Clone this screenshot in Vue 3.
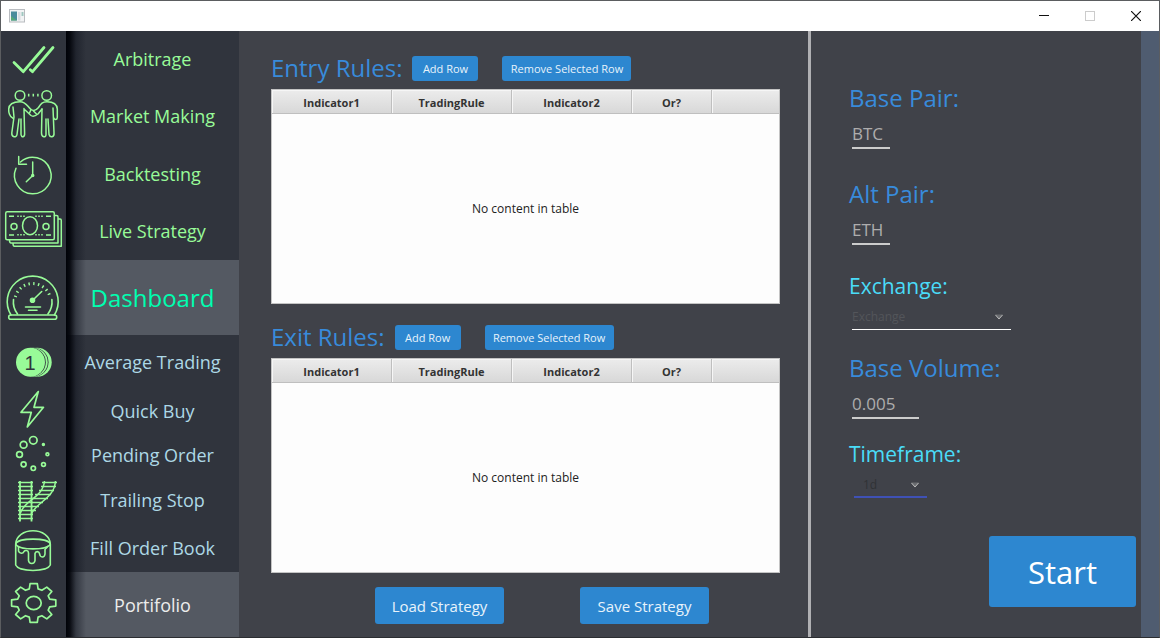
<script setup>
import { ref } from 'vue'

const menu = [
  { id: 'arbitrage', label: 'Arbitrage', top: 31, height: 56, tone: 'green' },
  { id: 'market', label: 'Market Making', top: 87, height: 58, tone: 'green' },
  { id: 'backtest', label: 'Backtesting', top: 145, height: 57, tone: 'green' },
  { id: 'live', label: 'Live Strategy', top: 202, height: 58, tone: 'green' },
  { id: 'dashboard', label: 'Dashboard', top: 260, height: 75, tone: 'active' },
  { id: 'average', label: 'Average Trading', top: 335, height: 54, tone: 'blue' },
  { id: 'quick', label: 'Quick Buy', top: 389, height: 44, tone: 'blue' },
  { id: 'pending', label: 'Pending Order', top: 433, height: 44, tone: 'blue' },
  { id: 'trailing', label: 'Trailing Stop', top: 477, height: 46, tone: 'blue' },
  { id: 'fill', label: 'Fill Order Book', top: 523, height: 49, tone: 'blue' },
  { id: 'portfolio', label: 'Portifolio', top: 572, height: 65, tone: 'plain' }
]

const sections = [
  { id: 'entry', title: 'Entry Rules:' },
  { id: 'exit', title: 'Exit Rules:' }
]
const columns = ['Indicator1', 'TradingRule', 'Indicator2', 'Or?', '']

const basePair = ref('BTC')
const altPair = ref('ETH')
const volume = ref('0.005')
const exchange = ref('Exchange')
const timeframe = ref('1d')

// Eight-toothed cog, slightly wider than tall
function cog(cx, cy) {
  const pts = []
  for (let i = 0; i < 8; i++) {
    const a = (i * Math.PI) / 4
    for (const [d, r] of [[-0.27, 14.6], [-0.16, 19.6], [0.16, 19.6], [0.27, 14.6]]) {
      pts.push(`${(cx + Math.cos(a + d) * r * 1.14).toFixed(1)} ${(cy + Math.sin(a + d) * r).toFixed(1)}`)
    }
  }
  return `M${pts.join('L')}Z`
}
const cogPath = cog(33.7, 603)
</script>

<template>
  <div class="window">
    <header class="titlebar">
      <svg class="app-icon" width="16" height="14" viewBox="0 0 16 14" aria-hidden="true">
        <rect x="0.5" y="0.5" width="15" height="12.5" fill="#f2f3f4" stroke="#b9bcc0" />
        <rect x="2" y="2.5" width="6" height="9" fill="#4b8c9c" />
        <path d="M2 11.5V7l6 4.500z" fill="#57a878" />
        <rect x="9" y="3" width="2.500" height="8.500" fill="#d9dde2" />
        <rect x="12.500" y="3" width="2" height="4" fill="#9fc7c0" />
      </svg>
      <div class="controls">
        <button type="button" aria-label="Minimize">
          <svg width="10" height="10" viewBox="0 0 10 10"><path d="M0 4.500H10" stroke="#111" /></svg>
        </button>
        <button type="button" aria-label="Maximize">
          <svg width="10" height="10" viewBox="0 0 10 10"><rect x="0.500" y="0.500" width="9" height="9" fill="none" stroke="#ccc" /></svg>
        </button>
        <button type="button" aria-label="Close">
          <svg width="10" height="10" viewBox="0 0 10 10"><path d="M0 0L10 10M10 0L0 10" stroke="#111" stroke-width="1.200" /></svg>
        </button>
      </div>
    </header>

    <div class="body">
      <nav class="menu">
        <button
          v-for="item in menu"
          :key="item.id"
          type="button"
          class="item"
          :class="[item.tone, item.id]"
        >
          <span class="icon">
            <svg width="66" :height="item.height" :viewBox="`0 ${item.top} 66 ${item.height}`" aria-hidden="true">
              <g v-if="item.id === 'arbitrage'" stroke-width="2.800">
                <path d="M14 62.500L23.300 71.700L44 47.500M30.300 69.700L32.500 71.700L53 47.500" />
              </g>
              <g v-else-if="item.id === 'market'" stroke-width="1.500">
                <circle cx="20" cy="95.500" r="4.800" />
                <circle cx="46.700" cy="95.500" r="4.800" />
                <path d="M28.700 93.800v2.600M33.300 93.800v2.600M37.900 93.800v2.600" stroke-linecap="butt" />
                <path d="M13 118.300C9.500 117 8.500 112 8.700 109C9 104 14 101.700 20 101.700C26 101.700 27 106 31 109.500C34 111.500 36.500 110 38.500 107.500C41 103.500 42.500 101.700 47 101.700C53 101.700 57 104 57.300 109V117.500C57.300 120 54.500 120 53.800 118" />
                <path d="M13 107L14 117L11.800 133C11.500 137.500 16.500 138 17 134.500L19 119M21 119V134.500C21.500 138 25 137.500 24.600 133L24 108.500M24 109L31 115.500C33 117 36 115.500 38 114L42 109" />
                <path d="M42 109L41.500 133C41.500 137.500 46 138 46 134.500V119M48 119L49 134.500C50 138 54.500 137.500 54 133L53 108M33.500 111L36.500 114M31 109.500L29.500 113" />
              </g>
              <g v-else-if="item.id === 'backtest'" stroke-width="1.500">
                <path d="M20.500 162A18.300 18.300 0 1 1 16 168.300M18.700 156.500V164.300H26.500M32.700 162V175.500L26.300 181.700" />
                <circle cx="32.700" cy="175.500" r="1" fill="#98fb98" />
              </g>
              <g v-else-if="item.id === 'live'" stroke-width="1.500">
                <rect x="5.700" y="211.700" width="48.600" height="28" rx="1.500" />
                <path d="M54.500 215.500H56.500Q58 215.500 58 217V243H11Q9.500 243 9.500 240M58.500 219H60Q61.300 219 61.300 220.500V246.300H14.500Q13 246.300 13 243.500" />
                <ellipse cx="30" cy="225.700" rx="7.500" ry="9" />
                <circle cx="14" cy="226.500" r="3" /><circle cx="46" cy="226.500" r="3" />
                <path d="M9 216.300h5M46 216.300h5M9 235h5M46 235h5M18 215.500v1.500M21 215.500v1.500M24 215.500v1.500M36 215.500v1.500M39 215.500v1.500M42 215.500v1.500M18 234v1.500M21 234v1.500M24 234v1.500M36 234v1.500M39 234v1.500M42 234v1.500" stroke-linecap="butt" />
              </g>
              <g v-else-if="item.id === 'dashboard'" stroke-width="1.600">
                <path d="M11 315A25.500 25.500 0 1 1 54.400 315M17.500 314A20 20 0 0 1 13.500 299.500M47.900 314A20 20 0 0 0 51.900 299.500" />
                <path d="M15.300 297A18 18 0 0 1 50.100 297" stroke-width="3" stroke-dasharray="1.400 3.400" stroke-linecap="butt" />
                <rect x="8.700" y="315" width="48" height="4.300" rx="2" />
                <path d="M32.700 300.300L41.700 291.500M25.500 307H40.500M28.500 310.300H37" />
                <circle cx="32.500" cy="300.300" r="2" fill="#98fb98" />
              </g>
              <g v-else-if="item.id === 'average'" stroke="none">
                <circle cx="37.200" cy="362.300" r="14.500" fill="#98fb98" />
                <circle cx="34" cy="362.300" r="14.500" fill="#30343d" />
                <circle cx="33.200" cy="362.300" r="14.500" fill="#98fb98" />
                <circle cx="31.300" cy="362.300" r="14.500" fill="#30343d" />
                <circle cx="30.500" cy="362.300" r="14.500" fill="#98fb98" />
                <text x="30" y="369.500" text-anchor="middle" font-size="20" fill="#30343d">1</text>
              </g>
              <g v-else-if="item.id === 'quick'" stroke-width="1.700">
                <path d="M38.300 391.500L21 412.300H31.300L27.300 427L43.500 407.300H34Z" />
              </g>
              <g v-else-if="item.id === 'pending'" stroke-width="1.700">
                <circle cx="33.300" cy="440.300" r="3.800" /><circle cx="23.600" cy="444.700" r="3.400" />
                <circle cx="19.500" cy="454.500" r="2.900" /><circle cx="23.600" cy="464.300" r="2.500" />
                <circle cx="33.300" cy="468.300" r="2.200" /><circle cx="43.500" cy="464.500" r="1.900" />
                <circle cx="47.400" cy="454.300" r="1.400" /><circle cx="43.400" cy="444.400" r="0.900" />
              </g>
              <g v-else-if="item.id === 'trailing'" stroke-width="1.500" stroke-linecap="butt">
                <path d="M20 481V521.500M31.500 481V521.500" stroke-width="1.800" />
                <path d="M18 482.500h15M18 486.500h15M18 490.500h15M18 494.500h15M18 498.500h15M18 502.500h15M18 506.500h15M18 510.500h15M18 514.500h15M18 518.500h15" />
                <path d="M44.500 481C43 498 24 500 20.500 513M55.500 481C54 500 35 502 31 515" stroke-width="1.500" />
                <path d="M42 482.500h15M41 486.500h15M39 490.500h15M35 494.500h16M33 498.500h15M31 502.500h12M31 506.500h8M31 510.500h5" />
              </g>
              <g v-else-if="item.id === 'fill'" stroke-width="1.600">
                <path d="M15.700 544C16 536 24 530.800 33 530.800S50 536 50.300 544V565C47 572.500 19 572.500 15.700 565Z" stroke="none" />
                <path d="M15.700 544C16 536 24 530.800 33 530.800S50 536 50.300 544V565C47 572.300 19 572.300 15.700 565V544" />
                <path d="M15.700 544C18 537.500 48 537.500 50.300 544C48 550.500 18 550.500 15.700 544" />
                <path d="M18.500 547V551C19.500 554 23 554 24 551.500C25 550 28.500 550 28.500 553V560.500C29 564.500 34.500 564.500 35 560.500V553.500C35.500 551 39 551 39.500 553.500C40 558 44.500 558 45 554V549.500C46 548 47 548 47.500 546.500" />
              </g>
              <g v-else stroke-width="1.700">
                <path :d="cogPath" />
                <ellipse cx="33.700" cy="603" rx="7.500" ry="6.700" />
              </g>
            </svg>
          </span>
          <span class="label">{{ item.label }}</span>
        </button>
      </nav>

      <main class="rules">
        <section v-for="s in sections" :key="s.id" class="section" :class="s.id">
          <div class="heading">
            <h2 :id="s.id + '-title'">{{ s.title }}</h2>
            <button type="button" class="btn small">Add Row</button>
            <button type="button" class="btn small wide">Remove Selected Row</button>
          </div>
          <table :aria-labelledby="s.id + '-title'">
            <colgroup>
              <col class="c-first" /><col class="c-mid" /><col class="c-mid" /><col class="c-or" /><col />
            </colgroup>
            <thead>
              <tr><th v-for="c in columns" :key="c" scope="col">{{ c }}</th></tr>
            </thead>
            <tbody>
              <tr><td colspan="5">No content in table</td></tr>
            </tbody>
          </table>
        </section>
        <div class="actions">
          <button type="button" class="btn large">Load Strategy</button>
          <button type="button" class="btn large">Save Strategy</button>
        </div>
      </main>

      <aside class="settings">
        <div class="field f-base">
          <label for="base">Base Pair:</label>
          <input id="base" v-model="basePair" type="text" class="pair" />
        </div>
        <div class="field f-alt">
          <label for="alt">Alt Pair:</label>
          <input id="alt" v-model="altPair" type="text" class="pair" />
        </div>
        <div class="field bright f-exchange">
          <label for="exchange">Exchange:</label>
          <div class="select">
            <select id="exchange" v-model="exchange"><option>Exchange</option></select>
            <svg width="8" height="6" viewBox="0 0 8 6" aria-hidden="true"><path d="M0 0.500H8L4 5.500Z" fill="#6a6c70" /><path d="M0.500 1L4 5L7.500 1" fill="none" stroke="#b8b8b8" /></svg>
          </div>
        </div>
        <div class="field f-volume">
          <label for="volume">Base Volume:</label>
          <input id="volume" v-model="volume" type="text" class="volume" />
        </div>
        <div class="field bright f-time">
          <label for="time">Timeframe:</label>
          <div class="select time">
            <select id="time" v-model="timeframe"><option>1d</option></select>
            <svg width="8" height="6" viewBox="0 0 8 6" aria-hidden="true"><path d="M0 0.500H8L4 5.500Z" fill="#6a6c70" /><path d="M0.500 1L4 5L7.500 1" fill="none" stroke="#b8b8b8" /></svg>
          </div>
        </div>
        <button type="button" class="btn start">Start</button>
      </aside>
      <div class="edge"></div>
    </div>
  </div>
</template>

<style>
body {
  margin: 0;
  background: #404249;
}
</style>

<style scoped>
.window {
  box-sizing: border-box;
  display: flex;
  flex-direction: column;
  min-height: 100vh;
  border: 1px solid #5b5d60;
  border-bottom-color: #2b2d31;
  background: #404249;
  font-family: "Open Sans", "Noto Sans", sans-serif;
}
button,
input,
select {
  font-family: inherit;
}
button {
  border: 0;
  padding: 0;
  cursor: pointer;
}
.titlebar {
  display: flex;
  justify-content: space-between;
  align-items: center;
  height: 30px;
  padding-left: 8px;
  background: #fff;
}
.controls {
  display: flex;
  align-self: stretch;
}
.controls button {
  display: grid;
  place-items: center;
  width: 46px;
  background: none;
}
.body {
  display: flex;
  flex: 1;
}
.menu {
  display: flex;
  flex-direction: column;
  width: 238px;
  flex: none;
}
.item {
  display: flex;
  background: #30343d;
  font-size: 18px;
  font-weight: 400;
}
.item:last-child {
  flex: 1;
}
.icon {
  display: flex;
  width: 65px;
  flex: none;
  align-self: stretch;
  background: #30343d;
}
.icon svg {
  margin-left: -1px;
  flex: none;
  fill: none;
  stroke: #98fb98;
  stroke-linecap: round;
  stroke-linejoin: round;
}
.icon text {
  font-family: "Liberation Sans", sans-serif;
}
.label {
  display: flex;
  flex: 1;
  align-items: center;
  justify-content: center;
  align-self: stretch;
  background: linear-gradient(90deg, #000208 0, rgba(2, 4, 10, 0.9) 4px, rgba(14, 18, 28, 0.45) 10px, transparent 20px);
  white-space: nowrap;
}
.green { color: #98fb98; }
.blue { color: #add8e6; }
.plain { color: #ececec; }
.active { color: #00ffb0; font-size: 24px; }
.active .label,
.plain .label {
  background-color: #545962;
}
.rules {
  flex: 1;
  min-width: 0;
  padding: 0 28px 0 32px;
  border-right: 3px solid #b0b0b3;
}
.heading {
  display: flex;
  align-items: center;
  height: 34px;
  padding-bottom: 4px;
}
.entry { padding-top: 20px; }
.exit { padding-top: 16px; }
h2 {
  margin: 0 10px 0 0;
  color: #388bdb;
  font-size: 24px;
  font-weight: 400;
  line-height: 34px;
  white-space: nowrap;
}
.btn {
  border-radius: 3px;
  background: #2d87d0;
  color: #e8f3fb;
  white-space: nowrap;
}
.small {
  width: 66px;
  height: 25px;
  font-size: 11px;
}
.wide {
  width: 129px;
  margin-left: 24px;
}
table {
  width: 100%;
  height: 215px;
  table-layout: fixed;
  border-collapse: separate;
  border-spacing: 0;
  border: 1px solid #c4c4c4;
  background: #fdfdfd;
  color: #222;
  font-size: 12px;
}
.c-first,
.c-mid { width: 120px; }
.c-or { width: 80px; }
th {
  box-sizing: border-box;
  height: 24px;
  padding: 2px 0 0;
  border-right: 1px solid #bfbfbf;
  border-bottom: 1px solid #bfbfbf;
  background: linear-gradient(#ececec, #d8d8d8);
  box-shadow: inset 1px 1px 0 #f6f6f6;
  color: #333;
  font-size: 11px;
  font-weight: 700;
}
th:last-child { border-right: 0; }
td {
  padding: 0;
  text-align: center;
}
.actions {
  display: flex;
  justify-content: center;
  gap: 76px;
  padding: 14px 0 13px 33px;
}
.large {
  width: 129px;
  height: 37px;
  font-size: 15px;
}
.settings {
  display: flex;
  flex-direction: column;
  width: 330px;
  box-sizing: border-box;
  flex: none;
  padding: 49px 5px 0 38px;
}
.field {
  display: flex;
  flex-direction: column;
  align-items: flex-start;
}
.field label {
  color: #388bdb;
  font-size: 24px;
  line-height: 36px;
}
.bright label {
  color: #4adcf8;
  font-size: 21px;
}
.field input {
  box-sizing: border-box;
  height: 29px;
  margin: 4px 0 0 3px;
  padding: 0;
  border: 0;
  border-bottom: 2px solid #ccc;
  outline: 0;
  border-radius: 0;
  background: none;
  color: #aeadad;
  font-size: 17px;
}
.field .pair { width: 38px; }
.field .volume { width: 67px; }
.f-alt { margin-top: 27px; }
.f-exchange { margin-top: 23px; }
.f-volume { margin-top: 20px; }
.f-time { margin-top: 17px; }
.select {
  position: relative;
  width: 159px;
  margin-left: 3px;
}
.select select {
  display: block;
  box-sizing: border-box;
  width: 100%;
  height: 26px;
  padding: 0;
  appearance: none;
  border: 0;
  border-bottom: 1px solid #fff;
  border-radius: 0;
  background: none;
  color: #53555a;
  font-size: 12px;
}
.select svg {
  position: absolute;
  top: 10px;
  right: 8px;
}
.time {
  width: 73px;
  margin-left: 5px;
}
.time select {
  padding-left: 9px;
  border-bottom: 2px solid #3f51b5;
  color: #303236;
}
.start {
  align-self: flex-end;
  width: 147px;
  height: 71px;
  margin-top: 38px;
  color: #fff;
  font-size: 31px;
  font-weight: 400;
}
.edge {
  width: 18px;
  flex: none;
  background: #4f5c70;
}
</style>
